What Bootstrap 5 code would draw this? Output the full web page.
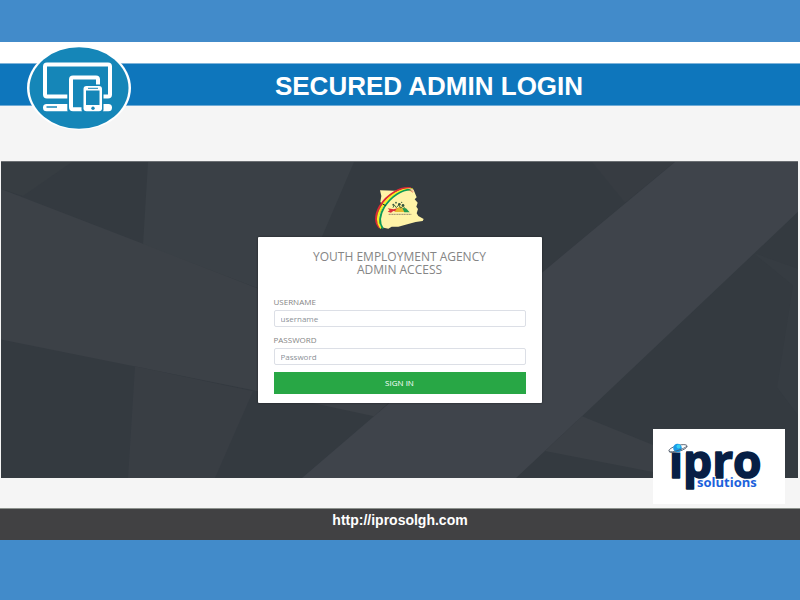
<!DOCTYPE html>
<html lang="en">
<head>
<meta charset="utf-8">
<meta name="viewport" content="width=device-width, initial-scale=1">
<title>Secured Admin Login</title>
<link href="https://cdn.jsdelivr.net/npm/bootstrap@5.3.0/dist/css/bootstrap.min.css" rel="stylesheet">
<style>
body{background:#428bca;font-family:"Open Sans","Noto Sans",sans-serif;padding:42px 0 60px}
.page-shell{background:#f5f5f5}
.top-strip{background:#fff;padding-top:21px}
.title-bar{background:#0e76bc;min-height:43px;padding:3px 0 0 58px;border-top:1px solid #7fb4da;border-bottom:1px solid #6fabd6;color:#fff}
.title-bar h1{font:bold 26px/38px "Liberation Sans",Arial,sans-serif}
.device-logo{left:26px;top:4px;width:106px;height:84px}
.stage{margin:55px 2px 0 1px;padding:24px 0 75px;border-top:1px solid #6b6f73;background:#343a40}
.stage-art{inset:0;width:100%;height:100%}
.crest{width:52px;height:45px;margin-bottom:6px}
.login-box{width:284px;max-width:94%;padding:13px 16px 9px;border:0;border-radius:1px;box-shadow:0 0 2px #1b1e21}
.login-box h2{font-size:12px;line-height:13px;color:#858585;margin-bottom:19px}
.login-box label{font-size:8px;line-height:13px;color:#858585;margin-bottom:2px}
.login-box .form-control{font-size:8px;line-height:11px;padding:2px 6px;border-color:#dcdfe6;border-radius:2px;min-height:17px;height:17px}
.login-box .form-control::placeholder{color:#8b9197}
.field-gap{margin-bottom:6px}
.field-last{margin-bottom:7px}
.login-box .btn{font-size:8px;line-height:20px;padding:0;border-radius:0;background:#28a745;border-color:#28a745;color:#fff}
.brand-tile{right:13px;bottom:-26px;width:132px;height:75px;background:#fff}
.site-foot{margin-top:30px;background:#414143;border-top:1px solid #8d928d;padding-bottom:8px}
.site-foot a{font:bold 14px/23px "Liberation Sans",Arial,sans-serif;color:#fff}
</style>
</head>
<body>
<div class="page-shell">
  <header class="top-strip position-relative">
    <div class="title-bar text-center"><h1 class="m-0">SECURED ADMIN LOGIN</h1></div>
    <svg class="device-logo position-absolute" viewBox="26 46 106 84" role="img" aria-label="Devices">
      <ellipse cx="79" cy="88" rx="52" ry="42" fill="#fff"/>
      <ellipse cx="79" cy="88" rx="49.5" ry="40.8" fill="#1586b8"/>
      <rect x="45" y="64.500" width="65" height="32" rx="2" fill="none" stroke="#fff" stroke-width="4"/>
      <rect x="43" y="104" width="69" height="7.300" rx="3.600" fill="#fff"/>
      <path d="M46.500 107H57" stroke="#1586b8" stroke-width="1.500"/>
      <rect x="67.300" y="74" width="34" height="39" rx="3" fill="#1586b8"/>
      <rect x="71" y="77.500" width="27" height="31.700" rx="2" fill="none" stroke="#fff" stroke-width="4"/>
      <rect x="81.500" y="84.500" width="22" height="28" rx="3" fill="#1586b8"/>
      <rect x="83.500" y="86" width="18.500" height="25.300" rx="3" fill="#fff"/>
      <rect x="86" y="90.500" width="13.500" height="14.500" fill="#1586b8"/>
      <path d="M88 88.300h10" stroke="#1586b8" stroke-width="1"/>
      <circle cx="93" cy="108.200" r="1.700" fill="#1586b8"/>
    </svg>
  </header>

  <main class="stage position-relative d-flex flex-column align-items-center">
    <svg class="stage-art position-absolute" viewBox="1 161 797 317" preserveAspectRatio="none" aria-hidden="true">
      <path d="M1 161H72L23 195 1 188Z" fill="#373d42"/>
      <path d="M148 161H354L322 236 322 312 143 244Z" fill="#3a4046"/>
      <path d="M1 188L143 243 258 288 420 350 388 403 374 416 258 391 1 339Z" fill="#3c4147"/>
      <path d="M135 366L253 391 215 478H128Z" fill="#393e44"/>
      <path d="M592 161H675L625 202Z" fill="#373c42"/>
      <path d="M753 252L798 268V415L777 387 793 285Z" fill="#363c42"/>
      <path d="M675 161H798V211L582 416 516 478H302L374 416 542 272Z" fill="#3f444b"/>
      <path d="M582 416L720 472 653 472 545 451Z" fill="#3b4046"/>
    </svg>
    <svg class="crest position-relative" viewBox="45 32 156 135" role="img" aria-label="Youth Employment Agency">
      <path d="M63 45L108 46 150 37 164 43 168 54 173 66 167 72 176 82 172 94 177 101 173 114 178 122 194 131 191 137 170 140 145 147 118 154 98 154 88 160 64 155 60 120 73 90 64 80 67 62Z" fill="#fff3a7"/>
      <path d="M62 157C49 145 46 122 63 92 84 58 123 34 156 39" fill="none" stroke="#dc2b34" stroke-width="6"/>
      <path d="M66 159C54 143 53 121 69 94 90 61 126 38 161 42" fill="none" stroke="#f7ee20" stroke-width="6"/>
      <path d="M72 160C60 143 60 122 76 95 96 64 129 41 158 43" fill="none" stroke="#0c9a58" stroke-width="5"/>
      <path d="M146 38L162 42 166 52 158 45Z" fill="#f6c3a0"/><path d="M150 43L162 51" stroke="#df4640" stroke-width="2"/>
      <path d="M71 86L80 91" stroke="#222" stroke-width="3"/>
      <path d="M86 99L104 102 117 98 119 110 103 107 96 112 86 109 92 105Z" fill="#dd3038"/>
      <path d="M112 101L124 93 136 100 141 110H107Z" fill="#e6b82d"/>
      <path d="M130 98L141 99 152 111H136Z" fill="#229a50"/>
      <g fill="#35543f"><circle cx="103" cy="88" r="3"/><circle cx="111" cy="82" r="2.500"/><circle cx="121" cy="87" r="4"/><circle cx="132" cy="90" r="4"/><circle cx="128" cy="81" r="2"/></g>
      <path d="M102 97L106 89 112 97 119 89 125 98 133 92 137 99" fill="none" stroke="#4e7040" stroke-width="3"/>
      <path d="M89 117H157" stroke="#9a8c71" stroke-width="3" stroke-dasharray="4 1"/>
    </svg>
    <form class="login-box card position-relative" onsubmit="return false">
      <h2 class="text-center fw-normal">YOUTH EMPLOYMENT AGENCY<br>ADMIN ACCESS</h2>
      <label for="user">USERNAME</label>
      <input class="form-control field-gap" id="user" type="text" placeholder="username">
      <label for="pass">PASSWORD</label>
      <input class="form-control field-last" id="pass" type="password" placeholder="Password">
      <button class="btn w-100" type="submit">SIGN IN</button>
    </form>
    <svg class="brand-tile position-absolute" viewBox="653 429 132 75" role="img" aria-label="ipro solutions">
      <g font-family="Open Sans, Noto Sans, sans-serif" font-weight="700">
        <text x="669" y="478" font-size="46" fill="#071f45" stroke="#071f45" stroke-width="1.6" stroke-linejoin="round">ipro</text>
        <rect x="668" y="438" width="18" height="14.500" fill="#fff"/>
        <text x="697" y="487" font-size="13" fill="#1c62dc" stroke="#fff" stroke-width="2" paint-order="stroke">solutions</text>
      </g>
      <ellipse cx="678" cy="448.500" rx="9.500" ry="3" transform="rotate(-16 678 448.500)" fill="none" stroke="#4b5666" stroke-width=".8"/>
      <circle cx="677.500" cy="448" r="4.300" fill="#1a9be8"/>
      <circle cx="678.500" cy="446.500" r="2" fill="#35d0f2"/>
      <path d="M669 451.500C672 453 684 449 687 446" fill="none" stroke="#4b5666" stroke-width=".8"/>
    </svg>
  </main>

  <footer class="site-foot text-center"><a class="d-block text-decoration-none" href="http://iprosolgh.com">http://iprosolgh.com</a></footer>
</div>
<script src="https://cdn.jsdelivr.net/npm/bootstrap@5.3.0/dist/js/bootstrap.bundle.min.js"></script>
</body>
</html>
